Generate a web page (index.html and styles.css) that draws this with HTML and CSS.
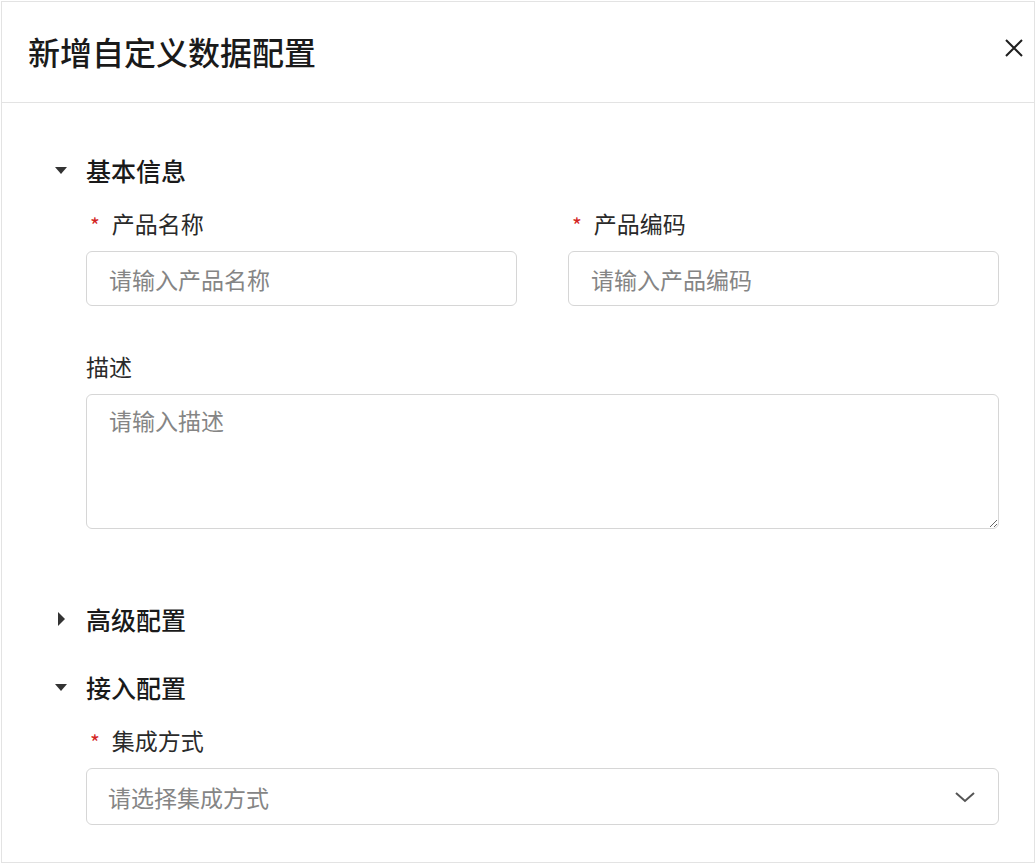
FILE: index.html
```html
<!DOCTYPE html>
<html lang="zh-CN">

<head>
    <meta charset="UTF-8">
    <meta name="viewport" content="width=device-width, initial-scale=1.0">
    <title>新增自定义数据配置</title>
    <link rel="stylesheet" href="styles.css">
</head>

<body>
    <div class="dialog">
        <div class="dialog-header">
            <h1>新增自定义数据配置</h1>
            <button class="close-btn" aria-label="关闭">
                <svg width="20" height="20" viewBox="0 0 20 20">
                    <path d="M2 2 L18 18 M18 2 L2 18" stroke="#1f1f1f" stroke-width="2" fill="none" />
                </svg>
            </button>
        </div>

        <div class="dialog-body">
            <!-- 基本信息 -->
            <div class="section">
                <div class="section-title">
                    <span class="caret down"></span>基本信息
                </div>
                <div class="row two-col">
                    <div class="field">
                        <label><span class="req">*</span>产品名称</label>
                        <input type="text" placeholder="请输入产品名称">
                    </div>
                    <div class="field">
                        <label><span class="req">*</span>产品编码</label>
                        <input type="text" placeholder="请输入产品编码">
                    </div>
                </div>
                <div class="row">
                    <div class="field">
                        <label>描述</label>
                        <textarea placeholder="请输入描述"></textarea>
                    </div>
                </div>
            </div>

            <!-- 高级配置 (collapsed) -->
            <div class="section collapsed">
                <div class="section-title">
                    <span class="caret right"></span>高级配置
                </div>
            </div>

            <!-- 接入配置 -->
            <div class="section">
                <div class="section-title">
                    <span class="caret down"></span>接入配置
                </div>
                <div class="row">
                    <div class="field">
                        <label><span class="req">*</span>集成方式</label>
                        <div class="select">
                            <span class="select-placeholder">请选择集成方式</span>
                            <svg width="22" height="14" viewBox="0 0 22 14">
                                <path d="M2 3 L11 11 L20 3" stroke="#555" stroke-width="2" fill="none" />
                            </svg>
                        </div>
                    </div>
                </div>
            </div>
        </div>
    </div>
</body>

</html>
```

FILE: styles.css
```css
* {
    box-sizing: border-box;
}

body {
    margin: 0;
    padding: 1px;
    font-family: "Noto Sans CJK SC", "Noto Sans", sans-serif;
    background: #fff;
    color: #1f1f1f;
}

.dialog {
    width: 1034px;
    height: 862px;
    border: 1px solid #e3e3e3;
    background: #fff;
    overflow: hidden;
}

.dialog-header {
    height: 101px;
    display: flex;
    align-items: center;
    justify-content: space-between;
    padding: 0 9px 0 26px;
    border-bottom: 1px solid #e3e3e3;
}

.dialog-header h1 {
    margin: 0;
    font-size: 32px;
    font-weight: 500;
    color: #1a1a1a;
    line-height: 40px;
    margin-top: -2px;
}

.close-btn {
    background: none;
    border: none;
    padding: 0;
    width: 22px;
    height: 22px;
    margin-bottom: 9px;
    display: flex;
    align-items: center;
    justify-content: center;
    cursor: pointer;
}

.dialog-body {
    padding: 50px 35px 0 52px;
}

.section-title {
    display: flex;
    align-items: center;
    height: 34px;
    font-size: 25px;
    font-weight: 500;
    color: #1a1a1a;
}

.caret {
    width: 32px;
    height: 34px;
    position: relative;
    flex-shrink: 0;
}

.caret::before {
    content: "";
    position: absolute;
    width: 0;
    height: 0;
}

.caret.down::before {
    left: 1px;
    top: 14px;
    border-left: 6px solid transparent;
    border-right: 6px solid transparent;
    border-top: 7px solid #333;
}

.caret.right::before {
    left: 4px;
    top: 10px;
    border-top: 7px solid transparent;
    border-bottom: 7px solid transparent;
    border-left: 7px solid #333;
}

.section {
    margin-bottom: 35px;
}

.section.collapsed {
    margin-top: 73px;
    margin-bottom: 34px;
}

.row {
    padding-left: 32px;
    margin-top: 20px;
}

.row + .row {
    margin-top: 44px;
}

.two-col {
    display: grid;
    grid-template-columns: 1fr 1fr;
    gap: 51px;
}

.field {
    display: flex;
    flex-direction: column;
}

.field label {
    height: 32px;
    line-height: 32px;
    font-size: 23px;
    color: #2a2a2a;
    margin-bottom: 12px;
    display: flex;
    align-items: center;
}

.req {
    color: #d32424;
    font-size: 21px;
    margin: 0 12px 0 4px;
    line-height: 1;
    position: relative;
    top: 2px;
}

input,
textarea,
.select {
    font-family: inherit;
    font-size: 23px;
    color: #1f1f1f;
    border: 1px solid #d6d6d6;
    border-radius: 6px;
    background: #fff;
    outline: none;
}

input {
    height: 55px;
    padding: 0 22px;
}

textarea {
    height: 135px;
    padding: 9px 22px;
    resize: vertical;
    line-height: 32px;
}

input::placeholder,
textarea::placeholder {
    color: #858585;
}

.select {
    height: 57px;
    padding: 0 22px 0 21px;
    display: flex;
    align-items: center;
    justify-content: space-between;
    cursor: pointer;
}

.select-placeholder {
    color: #858585;
}
```
